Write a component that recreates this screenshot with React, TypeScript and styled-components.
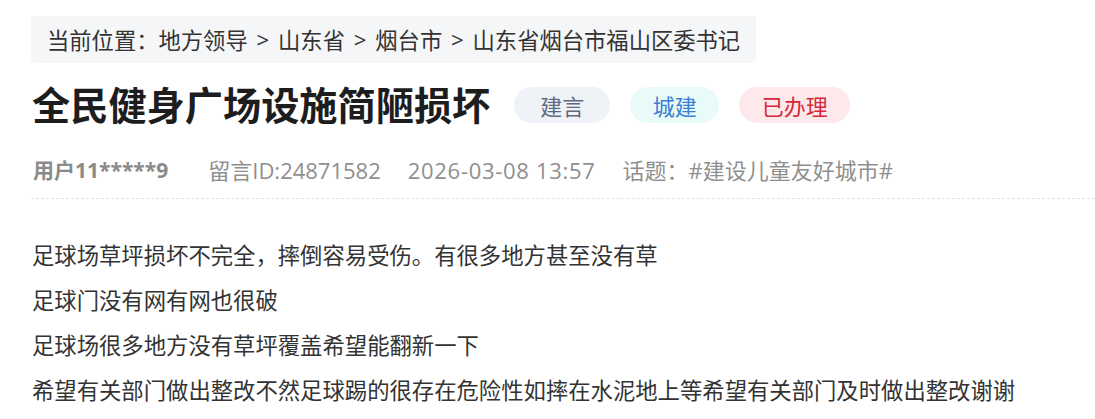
import React from "react";
import styled, { createGlobalStyle } from "styled-components";

const GlobalStyle = createGlobalStyle`
    html, body {
        margin: 0;
        padding: 0;
        background: #ffffff;
    }
    body {
        font-family: "Open Sans", "Noto Sans CJK SC", sans-serif;
        color: #333333;
    }
`;

const Page = styled.div`
    display: flex;
    flex-direction: column;
    align-items: flex-start;
    padding: 16px 0 0 31px;
`;

const Breadcrumb = styled.div`
    display: flex;
    align-items: center;
    height: 47px;
    padding: 0 16px;
    background: #f5f6f8;
    border-radius: 4px;
    font-size: 22.3px;
    color: #333333;
    white-space: nowrap;
`;

const Crumb = styled.span`
    color: #333333;
`;

const Separator = styled.span`
    margin: 0 8.8px;
    color: #333333;
`;

const TitleRow = styled.div`
    display: flex;
    align-items: center;
    margin-top: 17px;
    height: 50px;
`;

const Title = styled.h1`
    margin: 0 24px 0 1px;
    font-size: 38.2px;
    font-weight: 700;
    line-height: 50px;
    color: #1d1d1d;
    white-space: nowrap;
`;

type TagTone = "grey" | "cyan" | "red";

const tagColors: Record<TagTone, { bg: string; fg: string }> = {
    grey: { bg: "#eff2f7", fg: "#5c6b82" },
    cyan: { bg: "#e9fbf8", fg: "#3c7fd6" },
    red: { bg: "#fde9ec", fg: "#d8283a" },
};

const Tag = styled.span<{ $tone: TagTone; $wide?: boolean }>`
    display: inline-flex;
    align-items: center;
    justify-content: center;
    height: 36px;
    min-width: ${p => (p.$wide ? "96px" : "0")};
    padding: 0 22.5px;
    margin-right: 20px;
    box-sizing: border-box;
    border-radius: 18px;
    font-size: 22px;
    background: ${p => tagColors[p.$tone].bg};
    color: ${p => tagColors[p.$tone].fg};
`;

const Meta = styled.div`
    align-self: stretch;
    display: flex;
    align-items: center;
    margin-top: 25px;
    padding: 0 0 13px 2px;
    border-bottom: 1px dashed #e4e4e4;
    font-size: 22px;
    line-height: 30px;
    color: #8f8f8f;
    white-space: nowrap;
`;

const User = styled.span`
    margin-right: 40px;
    font-size: 21px;
    font-weight: 700;
    color: #8a8a8a;
`;

const MetaItem = styled.span<{ $spaced?: boolean }>`
    margin-right: 27px;
    letter-spacing: ${p => (p.$spaced ? "0.7px" : "normal")};
    color: #8f8f8f;
`;

const Content = styled.div`
    margin-top: 34px;
    padding-left: 1px;
    font-size: 22.35px;
    line-height: 45px;
    color: #333333;
`;

const Paragraph = styled.p`
    margin: 0;
    white-space: nowrap;
`;

const crumbs = ["地方领导", "山东省", "烟台市", "山东省烟台市福山区委书记"];

const lines = [
    "足球场草坪损坏不完全，摔倒容易受伤。有很多地方甚至没有草",
    "足球门没有网有网也很破",
    "足球场很多地方没有草坪覆盖希望能翻新一下",
    "希望有关部门做出整改不然足球踢的很存在危险性如摔在水泥地上等希望有关部门及时做出整改谢谢",
];

export default function App() {
    return (
        <>
            <GlobalStyle />
            <Page>
                <Breadcrumb>
                    <Crumb>当前位置：</Crumb>
                    {crumbs.map((c, i) => (
                        <React.Fragment key={c}>
                            {i > 0 ? <Separator>&gt;</Separator> : null}
                            <Crumb>{c}</Crumb>
                        </React.Fragment>
                    ))}
                </Breadcrumb>
                <TitleRow>
                    <Title>全民健身广场设施简陋损坏</Title>
                    <Tag $tone="grey" $wide>
                        建言
                    </Tag>
                    <Tag $tone="cyan">城建</Tag>
                    <Tag $tone="red">已办理</Tag>
                </TitleRow>
                <Meta>
                    <User>用户11*****9</User>
                    <MetaItem>留言ID:24871582</MetaItem>
                    <MetaItem $spaced>2026-03-08 13:57</MetaItem>
                    <MetaItem>话题：#建设儿童友好城市#</MetaItem>
                </Meta>
                <Content>
                    {lines.map(l => (
                        <Paragraph key={l}>{l}</Paragraph>
                    ))}
                </Content>
            </Page>
        </>
    );
}
